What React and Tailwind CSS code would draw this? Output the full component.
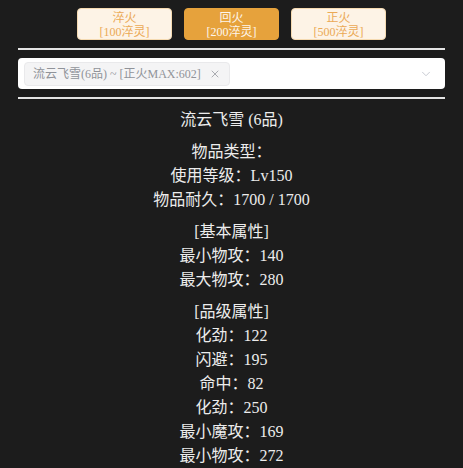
import { ChevronDown, X } from "lucide-react";

const font = { fontFamily: '"Liberation Serif", "Noto Sans CJK SC", serif' };

const buttons = [
  { name: "淬火", cost: "[100淬灵]", active: false },
  { name: "回火", cost: "[200淬灵]", active: true },
  { name: "正火", cost: "[500淬灵]", active: false },
];

const sections = [
  ["物品类型：", "使用等级：Lv150", "物品耐久：1700 / 1700"],
  ["[基本属性]", "最小物攻：140", "最大物攻：280"],
  [
    "[品级属性]",
    "化劲：122",
    "闪避：195",
    "命中：82",
    "化劲：250",
    "最小魔攻：169",
    "最小物攻：272",
  ],
];

export default function App() {
  return (
    <div
      className="min-h-screen w-full bg-[#1c1c1c] overflow-hidden"
      style={font}
    >
      <div className="flex justify-center gap-3 pt-2">
        {buttons.map((b) => (
          <button
            key={b.name}
            className={`w-[95px] h-[32px] pt-[2px] rounded border text-[12px] leading-[14px] flex flex-col items-center justify-center ${
              b.active
                ? "bg-[#e6a23c] border-[#e6a23c] text-[#fdf6ec]"
                : "bg-[#fdf3e6] border-[#f5dab1] text-[#eba955]"
            }`}
          >
            <span>{b.name}</span>
            <span>{b.cost}</span>
          </button>
        ))}
      </div>

      <div className="mx-[18px] mt-2 h-[2px] bg-[#e4e4e4]" />

      <div className="mx-[18px] mt-2 h-[31px] bg-white rounded flex items-center pl-[6px] pr-[12px]">
        <div className="h-[24px] flex items-center gap-2 bg-[#f4f4f5] border border-[#e9e9eb] rounded px-2 text-[12px] text-[#909399]">
          <span>流云飞雪(6品) ~ [正火MAX:602]</span>
          <X size={12} strokeWidth={1.5} />
        </div>
        <ChevronDown size={14} strokeWidth={1.5} className="ml-auto text-[#c0c4cc]" />
      </div>

      <div className="mx-[18px] mt-2 h-[2px] bg-[#e4e4e4]" />

      <div className="mx-[18px] pt-[9px] text-center text-[16px] leading-6 text-[#ececec]">
        <div>流云飞雪 (6品)</div>
        {sections.map((lines, i) => (
          <div key={i} className="mt-2">
            {lines.map((l) => (
              <div key={l}>{l}</div>
            ))}
          </div>
        ))}
      </div>
    </div>
  );
}
